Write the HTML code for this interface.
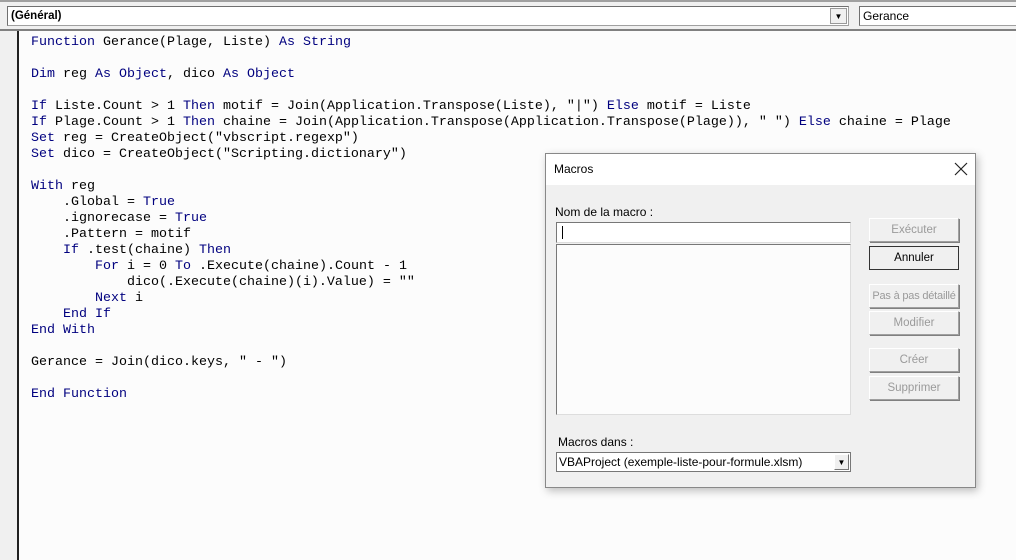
<!DOCTYPE html>
<html><head><meta charset="utf-8"><style>
*{box-sizing:border-box;margin:0;padding:0}
body{width:1016px;height:560px;background:#fcfcfc;position:relative;overflow:hidden;font-family:"Liberation Sans",sans-serif}
.abs{position:absolute}
#top{left:0;top:0;width:1016px;height:31px;background:#f0f0f0;border-top:2px solid #a0a0a0;border-bottom:2px solid #808080}
.combo{background:#fff;border:1px solid #a0a0a0;border-top-color:#707070;border-left-color:#707070;font-size:12px;padding:0 3px;line-height:18px;height:20px}
#margin{left:0;top:31px;width:19px;height:529px;background:#f0f0f0;border-right:2px solid #202020}
pre{position:absolute;left:31px;top:35px;font-family:"Liberation Mono",monospace;font-size:13.33px;line-height:16px;color:#000}
.k{color:#00007f}
#dlg{left:545px;top:153px;width:431px;height:335px;background:#f0f0f0;border:1px solid #888;box-shadow:2px 3px 8px rgba(0,0,0,.25)}
#tb{left:0;top:0;width:429px;height:31px;background:#fff;font-size:12px;padding:8px 8px}
.lbl{font-size:12px;color:#000}
.btn{position:absolute;left:323px;width:90px;height:24px;background:#f0f0f0;border:1px solid #fff;border-right-color:#a0a0a0;border-bottom-color:#a0a0a0;font-size:11.5px;color:#9a9a9a;text-align:center;line-height:23px;white-space:nowrap;overflow:hidden;box-shadow:1px 1px 0 #808080}
</style></head><body>
<div id="top" class="abs">
 <div class="combo abs" style="left:7px;top:4px;width:842px;font-weight:bold;font-size:11.5px">(Général)</div>
 <div class="abs" style="left:830px;top:6px;width:17px;height:16px;background:#f0f0f0;border:1px solid #999;font-size:8px;text-align:center;line-height:15px">▼</div>
 <div class="combo abs" style="left:859px;top:4px;width:160px">Gerance</div>
</div>
<div id="margin" class="abs"></div>
<pre><span class="k">Function</span> Gerance(Plage, Liste) <span class="k">As String</span>

<span class="k">Dim</span> reg <span class="k">As Object</span>, dico <span class="k">As Object</span>

<span class="k">If</span> Liste.Count &gt; 1 <span class="k">Then</span> motif = Join(Application.Transpose(Liste), "|") <span class="k">Else</span> motif = Liste
<span class="k">If</span> Plage.Count &gt; 1 <span class="k">Then</span> chaine = Join(Application.Transpose(Application.Transpose(Plage)), " ") <span class="k">Else</span> chaine = Plage
<span class="k">Set</span> reg = CreateObject("vbscript.regexp")
<span class="k">Set</span> dico = CreateObject("Scripting.dictionary")

<span class="k">With</span> reg
    .Global = <span class="k">True</span>
    .ignorecase = <span class="k">True</span>
    .Pattern = motif
    <span class="k">If</span> .test(chaine) <span class="k">Then</span>
        <span class="k">For</span> i = 0 <span class="k">To</span> .Execute(chaine).Count - 1
            dico(.Execute(chaine)(i).Value) = ""
        <span class="k">Next</span> i
    <span class="k">End If</span>
<span class="k">End With</span>

Gerance = Join(dico.keys, " - ")

<span class="k">End Function</span></pre>
<div id="dlg" class="abs">
 <div id="tb" class="abs">Macros</div>
 <svg class="abs" style="left:408px;top:8px" width="14" height="14"><path d="M1 1L13 13M13 1L1 13" stroke="#222" stroke-width="1.2"/></svg>
 <div class="lbl abs" style="left:9px;top:51px">Nom de la macro :</div>
 <div class="abs" style="left:10px;top:68px;width:295px;height:21px;background:#fff;border:1px solid #777;border-right-color:#ddd;border-bottom-color:#ddd"><div style="position:absolute;left:5px;top:3px;width:1px;height:13px;background:#000"></div></div>
 <div class="abs" style="left:10px;top:90px;width:295px;height:171px;background:#fcfcfc;border:1px solid #777;border-right-color:#ddd;border-bottom-color:#ddd"></div>
 <div class="lbl abs" style="left:12px;top:281px">Macros dans :</div>
 <div class="abs" style="left:10px;top:298px;width:295px;height:20px;background:#fff;border:1px solid #777;font-size:12px;padding:2px 2px">VBAProject (exemple-liste-pour-formule.xlsm)</div>
 <div class="abs" style="left:288px;top:300px;width:15px;height:16px;background:#f0f0f0;border:1px solid #fff;border-right-color:#777;border-bottom-color:#777;font-size:8px;text-align:center;line-height:15px">▼</div>
 <div class="btn" style="top:64px">Exécuter</div>
 <div class="btn" style="top:92px;color:#000;border:1px solid #333;box-shadow:none">Annuler</div>
 <div class="btn" style="top:130px;font-size:11px;letter-spacing:-0.2px">Pas à pas détaillé</div>
 <div class="btn" style="top:157px">Modifier</div>
 <div class="btn" style="top:194px">Créer</div>
 <div class="btn" style="top:222px">Supprimer</div>
</div>
</body></html>
